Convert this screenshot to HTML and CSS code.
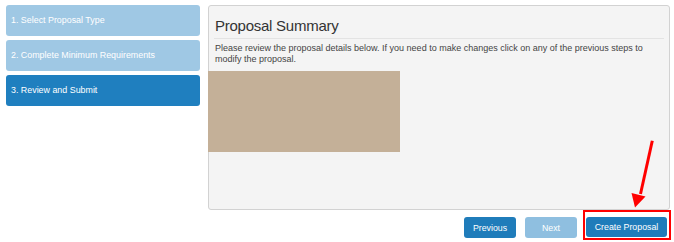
FILE: index.html
```html
<!DOCTYPE html>
<html lang="en">
<head>
<meta charset="utf-8">
<title>Proposal Summary</title>
<link rel="stylesheet" href="styles.css">
</head>
<body>
<div class="page">
  <nav class="steps">
    <div class="step done">1. Select Proposal Type</div>
    <div class="step done">2. Complete Minimum Requirements</div>
    <div class="step active">3. Review and Submit</div>
  </nav>
  <main class="main">
    <section class="panel">
      <h1 class="title">Proposal Summary</h1>
      <p class="intro">Please review the proposal details below. If you need to make changes click on any of the previous steps to modify the proposal.</p>
      <div class="preview"></div>
    </section>
    <div class="actions">
      <button class="btn">Previous</button>
      <button class="btn disabled">Next</button>
      <span class="highlight"><button class="btn">Create Proposal</button></span>
    </div>
  </main>
  <svg class="arrow" width="40" height="80" viewBox="620 135 40 80">
    <line x1="652.3" y1="140.7" x2="640.5" y2="194" stroke="#ff0000" stroke-width="3"/>
    <polygon points="631.5,193 645.5,196.5 635,207.5" fill="#ff0000"/>
  </svg>
</div>
</body>
</html>
```

FILE: styles.css
```css
html, body {
  margin: 0;
  padding: 0;
  background: #ffffff;
}
body {
  font-family: "Liberation Sans", Arial, sans-serif;
  color: #333333;
}
.page {
  position: relative;
  display: flex;
  gap: 8px;
  padding: 5px 3px 0 6px;
  width: 674px;
  height: 242px;
  box-sizing: border-box;
}
.steps {
  width: 194px;
  display: flex;
  flex-direction: column;
  gap: 4.5px;
  flex-shrink: 0;
}
.step {
  height: 30.5px;
  line-height: 30.5px;
  padding-left: 5px;
  border-radius: 3px;
  color: #ffffff;
  font-size: 8.9px;
}
.step.done {
  background: #9fc8e4;
}
.step.active {
  background: #1f7fbf;
}
.main {
  flex: 1;
  display: flex;
  flex-direction: column;
}
.panel {
  height: 205px;
  box-sizing: border-box;
  margin-right: 1px;
  background: #f4f4f4;
  border: 1px solid #d2d2d2;
  border-radius: 3px;
}
.title {
  margin: 0 5px;
  padding: 9px 1px 0;
  height: 23px;
  font-size: 15px;
  font-weight: normal;
  letter-spacing: -0.25px;
  line-height: 22px;
  color: #333333;
  border-bottom: 1px solid #e3e3e3;
}
.intro {
  margin: 0;
  padding: 4px 24px 0 6px;
  font-size: 9px;
  line-height: 10.5px;
  color: #444444;
  height: 32px;
  box-sizing: border-box;
}
.preview {
  margin-left: -1px;
  width: 192px;
  height: 81px;
  background: #c4b098;
}
.actions {
  display: flex;
  justify-content: flex-end;
  align-items: flex-start;
  gap: 9px;
}
.btn {
  font-family: "Liberation Sans", Arial, sans-serif;
  font-size: 8.8px;
  color: #ffffff;
  background: #1f7cba;
  border: none;
  border-radius: 3px;
  width: 52px;
  height: 21px;
  padding: 0;
  margin-top: 7px;
}
.btn.disabled {
  background: #8fbfe0;
}
.highlight {
  display: flex;
  margin-left: -3px;
  border: 2px solid #ff0000;
  padding: 0 2px 0 1px;
  height: 26px;
}
.highlight .btn {
  width: 81px;
  height: 20px;
  margin-top: 5px;
}
.arrow {
  position: absolute;
  left: 620px;
  top: 135px;
}
```
